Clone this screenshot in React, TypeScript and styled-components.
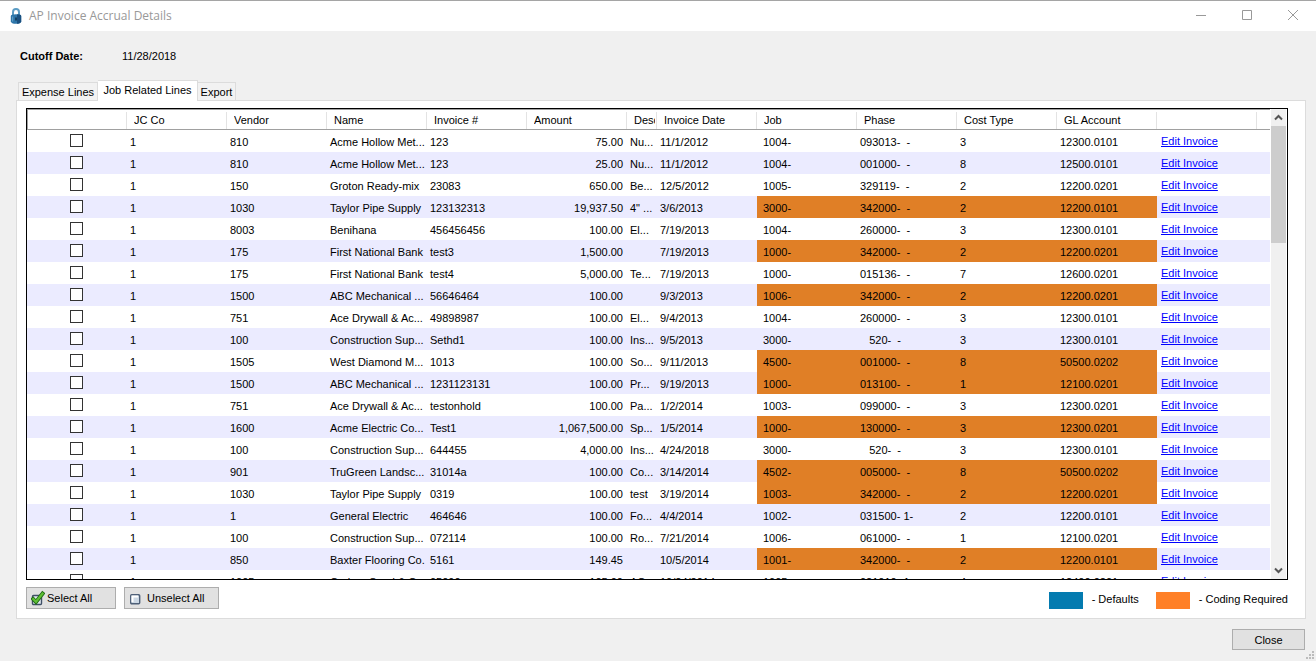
import React from "react";
import styled, { createGlobalStyle, css } from "styled-components";

const Global = createGlobalStyle`
  *, *::before, *::after { box-sizing: border-box; }
  body {
    margin: 0;
    background: #f0f0f0;
    color: #000;
    font: 11px/14px "Liberation Sans", Arial, sans-serif;
  }
  button, input { font: inherit; color: inherit; margin: 0; }
`;

const Window = styled.div`
  position: relative;
  display: flex;
  flex-direction: column;
  height: 100vh;
  min-height: 320px;
  overflow: hidden;
`;

const TitleBar = styled.header`
  display: flex;
  align-items: center;
  height: 31px;
  padding-left: 10px;
  border-top: 1px solid #a5a5a5;
  background: #fff;
`;

const Title = styled.h1`
  flex: 1;
  margin: 0 0 0 7px;
  color: #999;
  font: 400 12px/16px "Open Sans", "Noto Sans", sans-serif;
`;

const CaptionButton = styled.button`
  display: flex;
  align-items: center;
  justify-content: center;
  width: 46px;
  height: 30px;
  padding: 0 0 2px;
  border: 0;
  background: none;
`;

const Summary = styled.dl`
  display: flex;
  margin: 0;
  padding: 18px 20px 17px;
  dt { width: 102px; font-weight: 700; }
  dd { margin: 0; }
`;

const TabList = styled.div`
  display: flex;
  align-items: flex-end;
  padding-left: 18px;
`;

const Tab = styled.button<{ $w: number; $active?: boolean }>`
  width: ${(p) => p.$w}px;
  height: 18px;
  padding: 0;
  border: 1px solid #dcdcdc;
  border-bottom: 0;
  background: #f2f2f2;
  line-height: 18px;
  text-align: center;
  white-space: nowrap;
  & + & { border-left: 0; }
  ${(p) =>
    p.$active &&
    css`
      z-index: 1;
      height: 21px;
      margin-bottom: -1px;
      padding: 0 0 2px;
      background: #fff;
    `}
`;

const Panel = styled.main`
  display: flex;
  flex: 1;
  flex-direction: column;
  gap: 7px;
  min-height: 0;
  margin: 0 10px 0 16px;
  padding: 7px 17px 9px 9px;
  border: 1px solid #dcdcdc;
  background: #fff;
`;

const GridBox = styled.div`
  display: flex;
  flex: 1;
  gap: 1px;
  min-height: 0;
  padding-right: 1px;
  border: 1px solid #000;
`;

const GridView = styled.div`
  flex: 1;
  min-width: 0;
  overflow: hidden;
`;

const Table = styled.table`
  width: 100%;
  border-collapse: separate;
  border-spacing: 0;
  table-layout: fixed;
`;

const Col = styled.col<{ $w?: number }>`
  width: ${(p) => (p.$w ? `${p.$w}px` : "auto")};
`;

const HeadCell = styled.th`
  height: 21px;
  padding: 1px 2px 0 6px;
  border-top: 1px solid #a0a0a0;
  border-bottom: 1px solid #a0a0a0;
  background: linear-gradient(#e3e3e3, #e3e3e3) right bottom / 1px 17px no-repeat;
  font-weight: 400;
  line-height: 18px;
  text-align: left;
  white-space: nowrap;
  &:not(:first-child) { padding-left: 7px; }
  &:first-child { border-left: 1px solid #a0a0a0; }
  &:last-child { background: none; }
`;

const HeadLabel = styled.span`
  display: block;
  overflow: hidden;
`;

const Row = styled.tr`
  &:nth-child(even) { background: #ebebff; }
`;

const Cell = styled.td<{ $align?: "right" | "center"; $flag?: boolean; $pad?: number }>`
  height: 22px;
  padding: 2px 4px 0 ${(p) => p.$pad ?? 3}px;
  overflow: hidden;
  background: ${(p) => (p.$flag ? "#e07f26" : "transparent")};
  line-height: 20px;
  text-align: ${(p) => p.$align ?? "left"};
  text-overflow: clip;
  white-space: pre;
`;

const LinkCell = styled(Cell)`
  padding: 0 4px;
  line-height: 22px;
`;

const CheckCell = styled(Cell)`
  padding: 0 2px 2px 0;
`;

const Check = styled.input`
  appearance: none;
  display: block;
  width: 13px;
  height: 13px;
  margin: 0 auto;
  border: 1px solid #333;
  background: #fff;
`;

const Link = styled.a`
  color: #00f;
  text-decoration: underline;
`;

const ScrollBar = styled.div`
  display: flex;
  flex-direction: column;
  width: 15px;
  background: #f0f0f0;
`;

const ScrollButton = styled.button`
  display: flex;
  align-items: center;
  justify-content: center;
  height: 17px;
  padding: 0;
  border: 0;
  background: #f0f0f0;
`;

const Track = styled.div`
  flex: 1;
`;

const Thumb = styled.div`
  height: 27%;
  max-height: 117px;
  background: #cdcdcd;
`;

const Actions = styled.div`
  display: flex;
  align-items: center;
  gap: 8px;
`;

const Button = styled.button<{ $w: number }>`
  display: flex;
  align-items: center;
  justify-content: ${(p) => (p.$w < 80 ? "center" : "flex-start")};
  width: ${(p) => p.$w}px;
  height: ${(p) => (p.$w < 80 ? 21 : 22)}px;
  padding: 0 4px;
  border: 1px solid #adadad;
  background: #e1e1e1;
`;

const Glyph = styled.svg<{ $gap: number }>`
  flex: none;
  margin-right: ${(p) => p.$gap}px;
`;

const Legend = styled.ul`
  display: flex;
  gap: 17px;
  margin: 0 0 0 auto;
  padding: 5px 0 0;
  list-style: none;
`;

const LegendItem = styled.li<{ $color: string }>`
  display: flex;
  align-items: flex-start;
  gap: 9px;
  &::before {
    content: "";
    width: 34px;
    height: 17px;
    background: ${(p) => p.$color};
  }
`;

const Footer = styled.footer`
  display: flex;
  justify-content: flex-end;
  padding: 10px 11px 11px;
`;

const Grip = styled.svg`
  position: absolute;
  right: 2px;
  bottom: 2px;
`;

type Invoice = {
  vendor: string;
  name: string;
  invoice: string;
  amount: string;
  desc: string;
  date: string;
  job: string;
  phase: string;
  type: string;
  gl: string;
  flag: boolean;
};

const line = (
  vendor: string, name: string, invoice: string, amount: string, desc: string, date: string,
  job: string, phase: string, type: string, gl: string, flag = false
): Invoice => ({ vendor, name, invoice, amount, desc, date, job, phase, type, gl, flag });

const invoices: Invoice[] = [
  line("810", "Acme Hollow Met...", "123", "75.00", "Nu...", "11/1/2012", "1004-", "093013-  -", "3", "12300.0101"),
  line("810", "Acme Hollow Met...", "123", "25.00", "Nu...", "11/1/2012", "1004-", "001000-  -", "8", "12500.0101"),
  line("150", "Groton Ready-mix", "23083", "650.00", "Be...", "12/5/2012", "1005-", "329119-  -", "2", "12200.0201"),
  line("1030", "Taylor Pipe Supply", "123132313", "19,937.50", "4\" ...", "3/6/2013", "3000-", "342000-  -", "2", "12200.0101", true),
  line("8003", "Benihana", "456456456", "100.00", "El...", "7/19/2013", "1004-", "260000-  -", "3", "12300.0101"),
  line("175", "First National Bank", "test3", "1,500.00", "", "7/19/2013", "1000-", "342000-  -", "2", "12200.0201", true),
  line("175", "First National Bank", "test4", "5,000.00", "Te...", "7/19/2013", "1000-", "015136-  -", "7", "12600.0201"),
  line("1500", "ABC Mechanical ...", "56646464", "100.00", "", "9/3/2013", "1006-", "342000-  -", "2", "12200.0201", true),
  line("751", "Ace Drywall & Ac...", "49898987", "100.00", "El...", "9/4/2013", "1004-", "260000-  -", "3", "12300.0101"),
  line("100", "Construction Sup...", "Sethd1", "100.00", "Ins...", "9/5/2013", "3000-", "   520-  -", "3", "12300.0101"),
  line("1505", "West Diamond M...", "1013", "100.00", "So...", "9/11/2013", "4500-", "001000-  -", "8", "50500.0202", true),
  line("1500", "ABC Mechanical ...", "1231123131", "100.00", "Pr...", "9/19/2013", "1000-", "013100-  -", "1", "12100.0201", true),
  line("751", "Ace Drywall & Ac...", "testonhold", "100.00", "Pa...", "1/2/2014", "1003-", "099000-  -", "3", "12300.0201"),
  line("1600", "Acme Electric Co...", "Test1", "1,067,500.00", "Sp...", "1/5/2014", "1000-", "130000-  -", "3", "12300.0201", true),
  line("100", "Construction Sup...", "644455", "4,000.00", "Ins...", "4/24/2018", "3000-", "   520-  -", "3", "12300.0101"),
  line("901", "TruGreen Landsc...", "31014a", "100.00", "Co...", "3/14/2014", "4502-", "005000-  -", "8", "50500.0202", true),
  line("1030", "Taylor Pipe Supply", "0319", "100.00", "test", "3/19/2014", "1003-", "342000-  -", "2", "12200.0201", true),
  line("1", "General Electric", "464646", "100.00", "Fo...", "4/4/2014", "1002-", "031500- 1-", "2", "12200.0101"),
  line("100", "Construction Sup...", "072114", "100.00", "Ro...", "7/21/2014", "1006-", "061000-  -", "1", "12100.0201"),
  line("850", "Baxter Flooring Co.", "5161", "149.45", "", "10/5/2014", "1001-", "342000-  -", "2", "12200.0101", true),
  line("1005", "Carbon Sand & G...", "05090", "105.00", "AC...", "10/24/2014", "1005-", "021010- 1-", "4", "12400.0201"),
];

const columns: { label: string; width?: number }[] = [
  { label: "", width: 100 },
  { label: "JC Co", width: 100 },
  { label: "Vendor", width: 100 },
  { label: "Name", width: 100 },
  { label: "Invoice #", width: 100 },
  { label: "Amount", width: 100 },
  { label: "Desc", width: 30 },
  { label: "Invoice Date", width: 100 },
  { label: "Job", width: 100 },
  { label: "Phase", width: 100 },
  { label: "Cost Type", width: 100 },
  { label: "GL Account", width: 100 },
  { label: "", width: 100 },
  { label: "" },
];

const Padlock = () => (
  <svg width="12" height="16" viewBox="0 0 12 16" aria-hidden="true">
    <path d="M3 8V4.200C3 2.100 4.200 1 6 1S9 2.100 9 4.200V8" fill="none" stroke="#5b9cc4" strokeWidth="2" />
    <path d="M.8 8C.8 7 2.600 6.300 6 6.300S11.200 7 11.200 8V13.200C11.200 14.900 9 15.800 6 15.800S.8 14.900 .8 13.200Z" fill="#2c74a8" />
    <path d="M7 6.300C10 6.400 11.200 7 11.200 8V13.200C11.200 14.600 9.800 15.500 7 15.700Z" fill="#1a5080" />
    <path d="M2.600 8.500V13.500" stroke="#5c9dc6" strokeWidth="1.200" />
    <path d="M6 9.500V12.500" stroke="#0c2b45" strokeWidth="1.400" />
  </svg>
);

const Chevron = ({ down }: { down?: boolean }) => (
  <svg width="9" height="7" viewBox="0 0 9 7" aria-hidden="true">
    <path d={down ? "M1 1.500L4.500 5L8 1.500" : "M1 5.500L4.500 2L8 5.500"} fill="none" stroke="#555" strokeWidth="2" />
  </svg>
);

export default function App() {
  return (
    <Window>
      <Global />
      <TitleBar>
        <Padlock />
        <Title>AP Invoice Accrual Details</Title>
        <CaptionButton aria-label="Minimize">
          <svg width="10" height="10"><path d="M0 5.500H10" stroke="#999" /></svg>
        </CaptionButton>
        <CaptionButton aria-label="Maximize">
          <svg width="10" height="10"><path d="M.5 .5H9.500V9.500H.5Z" fill="none" stroke="#999" /></svg>
        </CaptionButton>
        <CaptionButton aria-label="Close window">
          <svg width="10" height="10"><path d="M0 0L10 10M10 0L0 10" stroke="#999" /></svg>
        </CaptionButton>
      </TitleBar>

      <Summary>
        <dt>Cutoff Date:</dt>
        <dd>11/28/2018</dd>
      </Summary>

      <TabList role="tablist">
        <Tab role="tab" aria-selected={false} $w={80}>Expense Lines</Tab>
        <Tab role="tab" aria-selected $active $w={100}>Job Related Lines</Tab>
        <Tab role="tab" aria-selected={false} $w={38}>Export</Tab>
      </TabList>

      <Panel>
        <GridBox>
          <GridView>
            <Table>
              <colgroup>
                {columns.map((c, i) => <Col key={i} $w={c.width} />)}
              </colgroup>
              <thead>
                <tr>
                  {columns.map((c, i) => <HeadCell key={i} scope="col"><HeadLabel>{c.label}</HeadLabel></HeadCell>)}
                </tr>
              </thead>
              <tbody>
                {invoices.map((r, i) => (
                  <Row key={i}>
                    <CheckCell><Check type="checkbox" aria-label={`Select invoice ${r.invoice}`} /></CheckCell>
                    <Cell>1</Cell>
                    <Cell>{r.vendor}</Cell>
                    <Cell>{r.name}</Cell>
                    <Cell>{r.invoice}</Cell>
                    <Cell $align="right">{r.amount}</Cell>
                    <Cell>{r.desc}</Cell>
                    <Cell>{r.date}</Cell>
                    <Cell $flag={r.flag} $pad={6}>{r.job}</Cell>
                    <Cell $flag={r.flag}>{r.phase}</Cell>
                    <Cell $flag={r.flag}>{r.type}</Cell>
                    <Cell $flag={r.flag}>{r.gl}</Cell>
                    <LinkCell><Link href="#edit">Edit Invoice</Link></LinkCell>
                    <Cell />
                  </Row>
                ))}
              </tbody>
            </Table>
          </GridView>
          <ScrollBar>
            <ScrollButton aria-label="Scroll up"><Chevron /></ScrollButton>
            <Track><Thumb /></Track>
            <ScrollButton aria-label="Scroll down"><Chevron down /></ScrollButton>
          </ScrollBar>
        </GridBox>

        <Actions>
          <Button $w={90}>
            <Glyph $gap={2} width="14" height="16" viewBox="0 0 14 16" aria-hidden="true">
              <rect x="1.500" y="5.500" width="9" height="9" rx="1" fill="#e4ebf2" stroke="#3f4f66" strokeWidth="1.400" />
              <path d="M.8 7.500L5 12L12.800 2" fill="none" stroke="#1f6b14" strokeWidth="4" />
              <path d="M1.500 8.200L5 11.800L12.200 2.700" fill="none" stroke="#5fbf35" strokeWidth="2.200" />
            </Glyph>
            Select All
          </Button>
          <Button $w={95}>
            <Glyph $gap={4} width="14" height="14" viewBox="0 0 14 14" aria-hidden="true">
              <rect x="1.700" y="3.700" width="9" height="9" rx="1" fill="#ccd8e4" stroke="#4f6078" strokeWidth="1.400" />
              <path d="M3.500 11V5.500H9" fill="none" stroke="#fff" strokeWidth="2" />
            </Glyph>
            Unselect All
          </Button>
          <Legend>
            <LegendItem $color="#047bb0">- Defaults</LegendItem>
            <LegendItem $color="#ff8027">- Coding Required</LegendItem>
          </Legend>
        </Actions>
      </Panel>

      <Footer>
        <Button $w={73}>Close</Button>
      </Footer>
      <Grip width="8" height="8" viewBox="0 0 8 8" aria-hidden="true">
        <path d="M6 0h2v2h-2zM3 3h2v2h-2zM6 3h2v2h-2zM0 6h2v2h-2zM3 6h2v2h-2zM6 6h2v2h-2z" fill="#bcbcbc" />
      </Grip>
    </Window>
  );
}
